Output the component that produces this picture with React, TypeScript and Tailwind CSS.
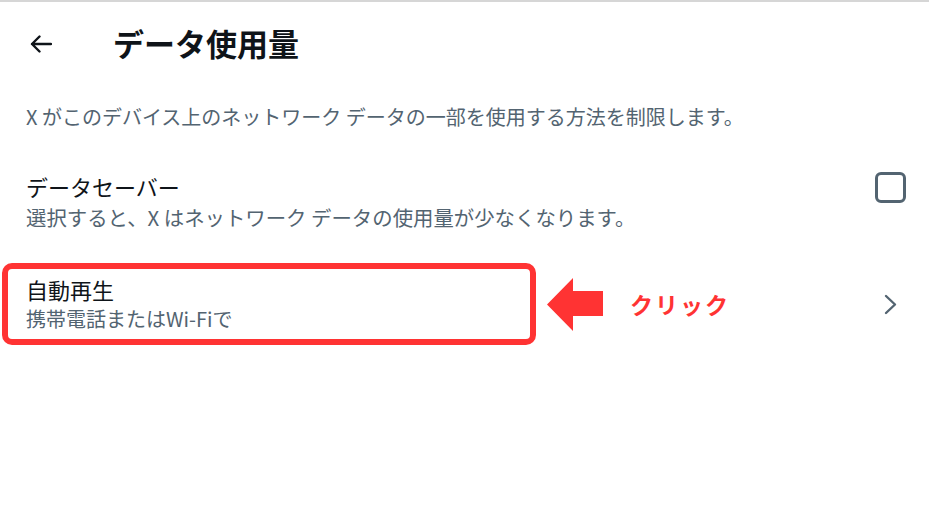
import React from "react";

const font = { fontFamily: '"Noto Sans CJK JP", "Noto Sans", sans-serif' };

function BackArrow() {
  return (
    <svg width="22" height="18" viewBox="0 0 22 18" fill="none" stroke="#0f1419" strokeWidth={2.4} strokeLinecap="round" strokeLinejoin="round">
      <path d="M2 9h19M9.5 1.5L2 9l7.5 7.5" />
    </svg>
  );
}

function RedArrow() {
  return (
    <svg width="56" height="53" viewBox="0 0 56 53">
      <polygon points="0,26.5 26,0 26,13 56,13 56,38 26,38 26,53" fill="#ff3333" />
    </svg>
  );
}

function Chevron() {
  return (
    <svg width="13" height="21" viewBox="0 0 13 21" fill="none" stroke="#536471" strokeWidth={2.4} strokeLinecap="round" strokeLinejoin="round">
      <path d="M2 2l9 8.5L2 19" />
    </svg>
  );
}

export default function App() {
  return (
    <div className="w-[929px] h-[530px] bg-white border-t-2 border-[#d6d6d6] overflow-hidden" style={font}>
      {/* header */}
      <div className="flex items-center h-[84px] pl-[30px]">
        <BackArrow />
        <h1 className="ml-[61px] -mt-[3px] text-[31px] font-bold text-[#0f1419] leading-none">データ使用量</h1>
      </div>

      <p className="mt-[17px] pl-[26px] text-[20px] leading-[28px] text-[#536471]">
        X がこのデバイス上のネットワーク データの一部を使用する方法を制限します。
      </p>

      {/* data saver */}
      <div className="mt-[41px] flex items-start justify-between pl-[26px] pr-[23px]">
        <div className="pt-[2px]">
          <div className="text-[22px] leading-[24px] text-[#0f1419]">データセーバー</div>
          <div className="mt-[7px] text-[20.4px] leading-[24px] text-[#536471]">選択すると、X はネットワーク データの使用量が少なくなります。</div>
        </div>
        <div className="w-[31px] h-[31px] rounded-[6px] border-[3px] border-[#536471]" />
      </div>

      {/* autoplay */}
      <div className="mt-[34px] flex items-center pl-[2px] pr-[32px]">
        <div className="w-[534px] h-[82px] rounded-[10px] border-[6px] border-[#ff3333] pl-[18px] pt-[8px]">
          <div className="text-[22px] leading-[24px] text-[#0f1419]">自動再生</div>
          <div className="mt-[6px] text-[20px] leading-[24px] text-[#536471]">携帯電話またはWi-Fiで</div>
        </div>
        <div className="ml-[11px]">
          <RedArrow />
        </div>
        <span className="ml-[27px] text-[23px] font-bold tracking-[2px] text-[#ff3333]">クリック</span>
        <div className="flex-1" />
        <Chevron />
      </div>
    </div>
  );
}
